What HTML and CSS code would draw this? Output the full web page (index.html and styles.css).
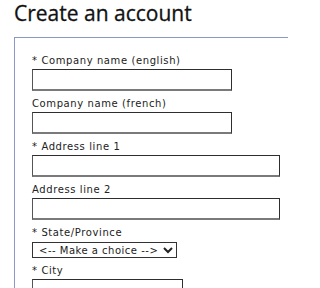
FILE: index.html
```html
<!DOCTYPE html>
<html lang="en">
<head>
<meta charset="utf-8">
<title>Create an account</title>
<link rel="stylesheet" href="styles.css">
</head>
<body>
<h1 class="title">Create an account</h1>
<form class="form">
  <fieldset class="box">
    <label class="lbl" for="cen">* Company name (english)</label>
    <input class="field w200" id="cen" type="text">
    <label class="lbl" for="cfr">Company name (french)</label>
    <input class="field w200" id="cfr" type="text">
    <label class="lbl" for="a1">* Address line 1</label>
    <input class="field w248" id="a1" type="text">
    <label class="lbl" for="a2">Address line 2</label>
    <input class="field w248" id="a2" type="text">
    <label class="lbl" for="st">* State/Province</label>
    <select class="choice" id="st"><option>&lt;-- Make a choice --&gt;</option></select>
    <label class="lbl" for="city">* City</label>
    <input class="field w151" id="city" type="text">
  </fieldset>
</form>
</body>
</html>
```

FILE: styles.css
```css
html, body {
  margin: 0;
  padding: 0;
  width: 288px;
  height: 288px;
  overflow: hidden;
  background: #fff;
}
body {
  box-sizing: border-box;
  padding-left: 14px;
  font-family: "DejaVu Sans", Verdana, sans-serif;
  color: #222;
}
.title {
  margin: 0;
  font-family: "Open Sans", "Liberation Sans", sans-serif;
  font-weight: 400;
  font-size: 21px;
  line-height: 26px;
  color: #111;
  -webkit-text-stroke: 0.3px #111;
}
.form {
  margin: 11px 0 0 0;
}
.box {
  box-sizing: border-box;
  margin: 0;
  width: 274px;
  min-width: 0;
  height: 260px;
  padding: 17px 0 0 17px;
  border: 1px solid #8a98c8;
  border-right: 0;
  border-bottom: 0;
  display: flex;
  flex-direction: column;
  align-items: flex-start;
}
.lbl {
  display: block;
  font-size: 10px;
  line-height: 12px;
  letter-spacing: 0.6px;
  margin-bottom: 2px;
  color: #222;
}
.field {
  box-sizing: border-box;
  flex: none;
  height: 22px;
  margin: 0 0 7px 0;
  padding: 0 3px;
  border: 1px solid #2e2e2e;
  border-bottom: 2px solid #7a7a7a;
  border-left-color: #555;
  background: #fff;
  font-family: "DejaVu Sans", sans-serif;
  font-size: 10px;
  border-radius: 0;
}
.w200 { width: 200px; }
.w248 { width: 248px; }
.w151 { width: 151px; }
.choice {
  box-sizing: border-box;
  flex: none;
  width: 145px;
  height: 16px;
  margin: 1px 0 7px 0;
  padding: 0 0 0 2px;
  border: 1px solid #333;
  border-radius: 0;
  background: #fff;
  font-family: "DejaVu Sans", sans-serif;
  font-size: 10px;
  letter-spacing: 0.5px;
  color: #222;
}
```
